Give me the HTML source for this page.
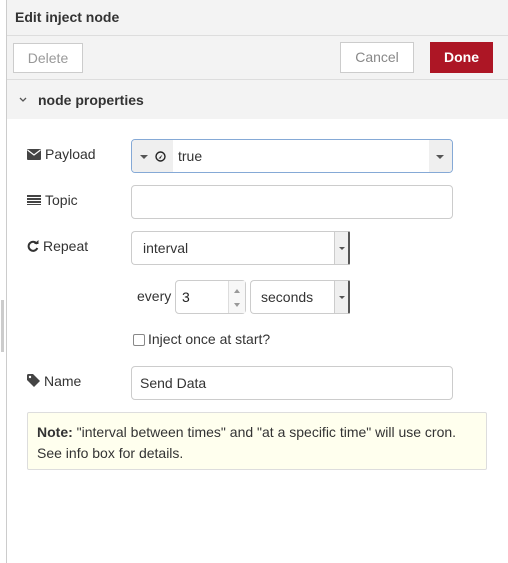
<!DOCTYPE html>
<html><head><style>
body{margin:0;width:508px;height:563px;background:#fff;font-family:"Liberation Sans",sans-serif;font-size:14px;color:#333;position:relative;overflow:hidden}
.a{position:absolute}
.in{position:absolute;border:1px solid #ccc;border-radius:4px;background:#fff;box-sizing:border-box}
.lab{position:absolute;left:27px;font-size:14px;color:#333}
.lab svg{vertical-align:-1px;margin-right:4px}
.caret{width:0;height:0;border-left:4px solid transparent;border-right:4px solid transparent;border-top:4px solid #555;position:absolute}
</style></head><body>
<div class="a" style="left:6px;top:0;width:1px;height:563px;background:#ccc"></div>
<div class="a" style="left:1px;top:300px;width:3px;height:52px;background:#ccc"></div>
<div class="a" style="left:7px;top:0;right:0;height:35px;background:#f3f3f3;border-bottom:1px solid #ddd"></div>
<div class="a" style="left:15px;top:9px;font-weight:bold;font-size:14px;color:#333">Edit inject node</div>
<div class="a" style="left:7px;top:36px;right:0;height:43px;background:#f3f3f3;border-bottom:1px solid #ddd"></div>
<div class="a" style="left:13px;top:43px;height:30px;border:1px solid #ccc;background:#fff;color:#999;text-align:center;line-height:28px;box-sizing:border-box;width:70px">Delete</div>
<div class="a" style="left:340px;top:42px;width:74px;height:31px;border:1px solid #ccc;background:#fff;color:#888;text-align:center;line-height:29px;box-sizing:border-box">Cancel</div>
<div class="a" style="left:430px;top:42px;width:63px;height:31px;background:#ad1625;color:#fff;text-align:center;line-height:31px;font-weight:bold">Done</div>
<div class="a" style="left:7px;top:80px;right:0;height:39px;background:#f3f3f3"></div>
<svg class="a" style="left:19px;top:97px" width="8" height="6"><path d="M1 1l3 3 3-3" fill="none" stroke="#555" stroke-width="1.3"/></svg>
<div class="a" style="left:38px;top:92px;font-weight:bold">node properties</div>

<div class="lab" style="top:146px"><svg width="14" height="11"><rect x="0" y="0" width="14" height="11" rx="1" fill="#444"/><path d="M0.5 1l6.5 5 6.5-5" fill="none" stroke="#fff" stroke-width="1.2"/></svg>Payload</div>
<div class="in" style="left:131px;top:139px;width:322px;height:34px;border-color:#85a9d6;overflow:hidden">
<div class="a" style="left:0;top:0;width:41px;height:32px;background:#efefef"></div>
<div class="caret" style="left:8px;top:15px"></div>
<svg class="a" style="left:23px;top:11px" width="11" height="11"><circle cx="5.5" cy="5.5" r="4.5" fill="none" stroke="#222" stroke-width="1.4"/><path d="M3.5 7.5L7.5 3.5 5.5 7.5z" fill="#222"/></svg>
<div class="a" style="left:46px;top:8px;color:#333">true</div>
<div class="a" style="right:0;top:0;width:23px;height:32px;background:#efefef"></div>
<div class="caret" style="right:8px;top:15px"></div>
</div>

<div class="lab" style="top:192px"><span style="display:inline-block;width:14px;height:10px;background:repeating-linear-gradient(#444 0 2px,#fff 2px 3px);margin-right:4px"></span>Topic</div>
<div class="in" style="left:131px;top:185px;width:322px;height:34px"></div>

<div class="lab" style="top:238px"><svg width="12" height="12"><path d="M10 4A4.5 4.5 0 1 0 10.3 8" fill="none" stroke="#333" stroke-width="2"/><path d="M7 4h4.5V0z" fill="#333"/></svg>Repeat</div>
<div class="in" style="left:131px;top:231px;width:219px;height:34px;border-right:2px solid #555;border-radius:4px 2px 2px 4px">
<div class="a" style="left:11px;top:8px">interval</div>
<div class="a" style="right:0;top:0;width:13px;height:32px;background:#efefef;border-left:1px solid #ccc"></div>
<div class="caret" style="right:3px;top:15px;border-width:3px 3px 0"></div></div>

<div class="a" style="left:137px;top:288px">every</div>
<div class="in" style="left:175px;top:280px;width:71px;height:34px">
<div class="a" style="left:6px;top:8px;color:#222">3</div>
<div class="a" style="right:0;top:0;width:16px;height:32px;border-left:1px solid #ddd;background:#f7f7f7"></div>
<div class="a" style="right:5px;top:8px;border-left:3px solid transparent;border-right:3px solid transparent;border-bottom:4px solid #999"></div>
<div class="a" style="right:5px;top:22px;border-left:3px solid transparent;border-right:3px solid transparent;border-top:4px solid #999"></div></div>
<div class="in" style="left:250px;top:280px;width:100px;height:34px;border-right:2px solid #555;border-radius:4px 2px 2px 4px">
<div class="a" style="left:10px;top:8px">seconds</div>
<div class="a" style="right:0;top:0;width:13px;height:32px;background:#efefef;border-left:1px solid #ccc"></div>
<div class="caret" style="right:3px;top:15px;border-width:3px 3px 0"></div></div>

<div class="a" style="left:133px;top:334px;width:10px;height:10px;border:1px solid #888;border-radius:2px"></div>
<div class="a" style="left:148px;top:331px">Inject once at start?</div>

<div class="lab" style="top:373px"><svg width="13" height="13"><path d="M0 1.5Q0 0 1.5 0H6L13 7 7 13 0 6z" fill="#444"/><circle cx="3" cy="3" r="1.2" fill="#fff"/></svg>Name</div>
<div class="in" style="left:131px;top:366px;width:322px;height:34px"><div class="a" style="left:8px;top:8px">Send Data</div></div>

<div class="a" style="left:27px;top:412px;width:460px;height:58px;box-sizing:border-box;background:#ffffee;border:1px solid #ddd;border-radius:2px;padding:9px 9px;line-height:21px">
<b>Note:</b> "interval between times" and "at a specific time" will use cron. See info box for details.</div>
</body></html>
